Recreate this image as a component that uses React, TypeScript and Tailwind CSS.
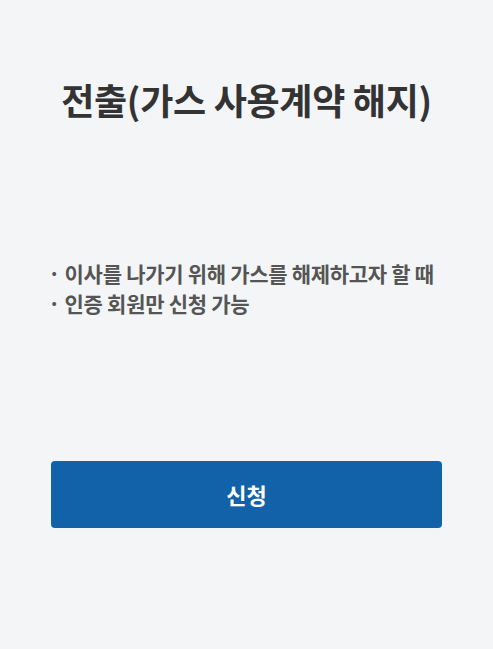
export default function App() {
  return (
    <div
      className="min-h-[649px] w-full bg-[#f4f5f7] px-[51px] pt-[75px]"
      style={{ fontFamily: '"Noto Sans CJK KR", "Noto Sans", sans-serif' }}
    >
      <h1 className="text-center text-[36px] font-bold leading-[48px] text-[#333333] tracking-[-0.3px]">
        전출(가스 사용계약 해지)
      </h1>
      <div className="mt-[135px] text-[21px] font-semibold leading-[30px] text-[#555555] tracking-[-0.3px] -ml-[3px]">
        <p>· 이사를 나가기 위해 가스를 해제하고자 할 때</p>
        <p>· 인증 회원만 신청 가능</p>
      </div>
      <button className="mt-[143px] flex h-[67px] w-full items-center justify-center rounded-[4px] bg-[#1262a9] text-[22px] font-bold text-white">
        신청
      </button>
    </div>
  );
}
